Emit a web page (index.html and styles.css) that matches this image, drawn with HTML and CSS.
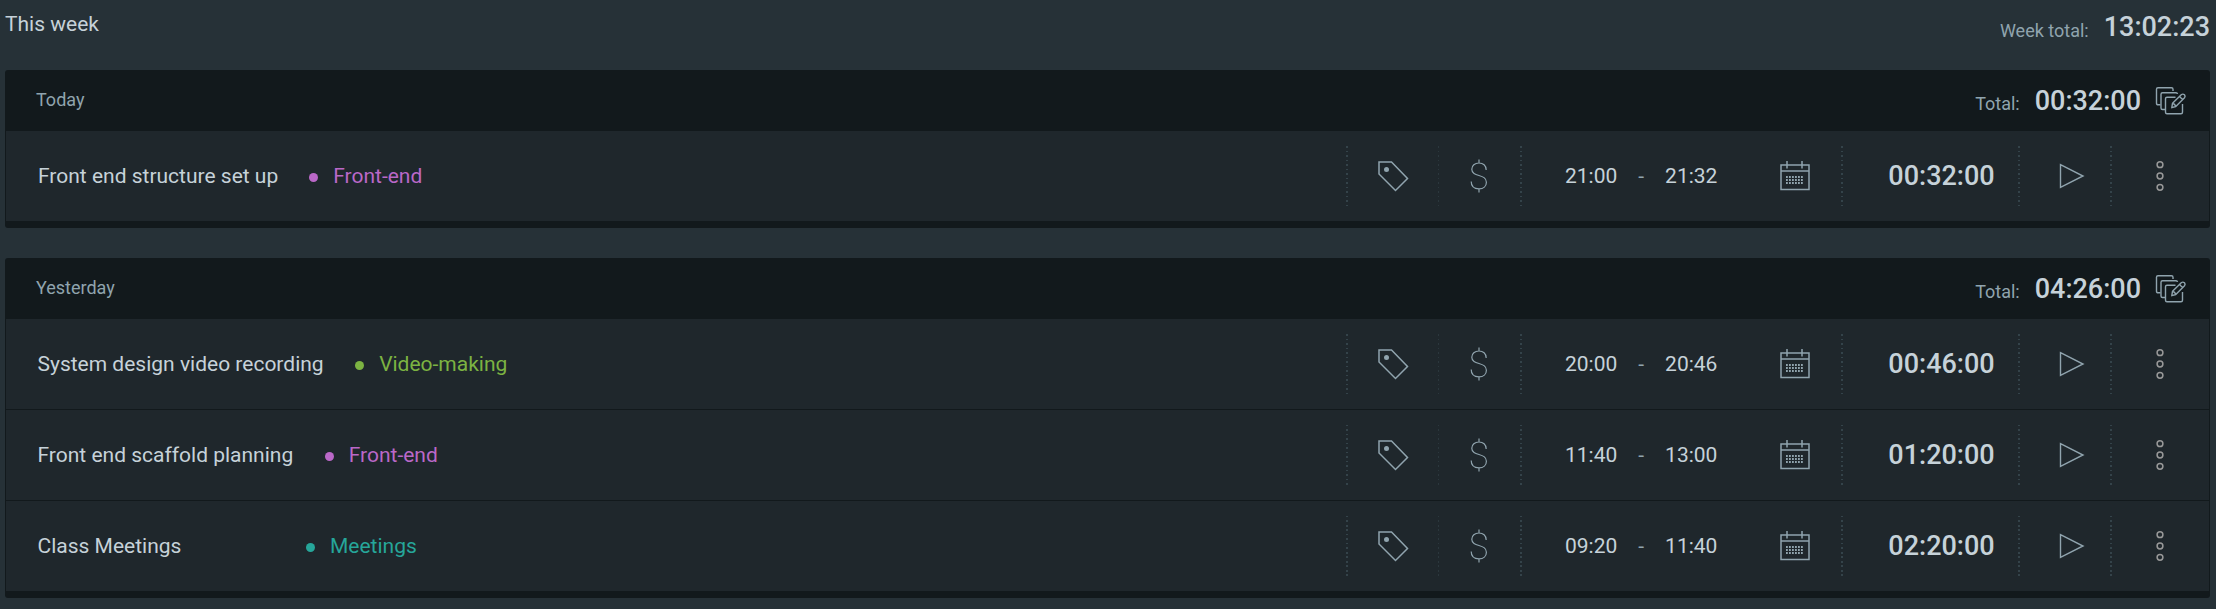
FILE: index.html
```html
<!DOCTYPE html>
<html lang="en">
<head>
<meta charset="utf-8">
<title>Time tracker</title>
<link rel="stylesheet" href="styles.css">
</head>
<body>
<svg class="sprite" aria-hidden="true">
  <symbol id="tag" viewBox="0 0 32 32"><path d="M2 2H14.5L30.5 18.5L18.5 30.5L2 14Z" fill="none" stroke="currentColor" stroke-width="1.5"/><circle cx="9.5" cy="9.5" r="2.5" fill="currentColor"/></symbol>
  <symbol id="dollar" viewBox="0 0 18 34"><path d="M9 .5V4M9 30V33.500M16.200 11C16.200 6.500 13 4 9 4C4.800 4 1.800 6.500 1.800 10.200C1.800 18.500 16.400 14.500 16.400 23.200C16.400 27.300 13.300 29.800 9 29.800C4.500 29.800 1.200 27.400 1.200 22.500" fill="none" stroke="currentColor" stroke-width="1.200"/></symbol>
  <symbol id="calendar" viewBox="0 0 30 30"><path d="M1 4H29V28.500H1ZM1 10H29M7 0V7.500M22 0V7.500" fill="none" stroke="currentColor" stroke-width="1.500"/><path d="M6 16H24M6 19H24M6 22H24" fill="none" stroke="currentColor" stroke-width="1.800" stroke-dasharray="1.800 1.200"/></symbol>
  <symbol id="play" viewBox="0 0 26 26"><path d="M1.500 1.700L24 13L1.500 24.300Z" fill="none" stroke="currentColor" stroke-width="1.400"/></symbol>
  <symbol id="more" viewBox="0 0 8 32"><g fill="none" stroke="#999" stroke-width="1.500"><circle cx="4" cy="4.700" r="2.900"/><circle cx="4" cy="16" r="2.900"/><circle cx="4" cy="27.300" r="2.900"/></g></symbol>
  <symbol id="bulk" viewBox="0 0 32 30"><g fill="none" stroke="currentColor" stroke-width="1.400" stroke-linejoin="round"><path d="M5.500 18.800H3Q1.500 18.800 1.500 17.300V3.300Q1.500 1.800 3 1.800H16.500Q18 1.800 18 3.300V5"/><path d="M10.500 23.500H7.500Q6 23.500 6 22V8.300Q6 6.800 7.500 6.800H21Q22.300 6.800 22.500 8"/><path d="M20.500 11.300H12Q10.500 11.300 10.500 12.800V26.300Q10.500 27.800 12 27.800H26Q27.500 27.800 27.500 26.300V18"/><path d="M16.800 21.700L17.500 17.300L26.500 8.500Q28 7.600 29.500 8.800Q30.700 10.300 29.500 11.800L20.800 20.500ZM17.500 17.300Q20 17.800 20.800 20.500M24.500 10.500L27.500 13.500"/></g></symbol>
</svg>

<main class="tracker">
  <header class="week">
    <span class="week-name">This week</span>
    <span class="sum"><span class="sum-label">Week total:</span><span class="duration">13:02:23</span></span>
  </header>

  <section class="card card-first">
    <header class="card-head">
      <span class="day">Today</span>
      <span class="sum"><span class="sum-label">Total:</span><span class="duration">00:32:00</span></span>
      <svg class="icon icon-bulk"><use href="#bulk"/></svg>
    </header>
    <div class="entry">
      <div class="info"><span class="title">Front end structure set up</span><span class="project pink">Front-end</span></div>
      <div class="cell"><svg class="icon icon-tag"><use href="#tag"/></svg></div>
      <div class="cell faint"><svg class="icon icon-dollar"><use href="#dollar"/></svg></div>
      <div class="cell times"><span class="clock">21:00</span><span class="dash">-</span><span class="clock">21:32</span><svg class="icon icon-calendar"><use href="#calendar"/></svg></div>
      <div class="cell amount"><span class="duration">00:32:00</span></div>
      <div class="cell start"><svg class="icon icon-play"><use href="#play"/></svg></div>
      <div class="cell"><svg class="icon icon-more"><use href="#more"/></svg></div>
    </div>
  </section>

  <section class="card">
    <header class="card-head">
      <span class="day">Yesterday</span>
      <span class="sum"><span class="sum-label">Total:</span><span class="duration">04:26:00</span></span>
      <svg class="icon icon-bulk"><use href="#bulk"/></svg>
    </header>
    <div class="entry">
      <div class="info"><span class="title">System design video recording</span><span class="project green">Video-making</span></div>
      <div class="cell"><svg class="icon icon-tag"><use href="#tag"/></svg></div>
      <div class="cell faint"><svg class="icon icon-dollar"><use href="#dollar"/></svg></div>
      <div class="cell times"><span class="clock">20:00</span><span class="dash">-</span><span class="clock">20:46</span><svg class="icon icon-calendar"><use href="#calendar"/></svg></div>
      <div class="cell amount"><span class="duration">00:46:00</span></div>
      <div class="cell start"><svg class="icon icon-play"><use href="#play"/></svg></div>
      <div class="cell"><svg class="icon icon-more"><use href="#more"/></svg></div>
    </div>
    <div class="entry">
      <div class="info"><span class="title">Front end scaffold planning</span><span class="project pink">Front-end</span></div>
      <div class="cell"><svg class="icon icon-tag"><use href="#tag"/></svg></div>
      <div class="cell faint"><svg class="icon icon-dollar"><use href="#dollar"/></svg></div>
      <div class="cell times"><span class="clock">11:40</span><span class="dash">-</span><span class="clock">13:00</span><svg class="icon icon-calendar"><use href="#calendar"/></svg></div>
      <div class="cell amount"><span class="duration">01:20:00</span></div>
      <div class="cell start"><svg class="icon icon-play"><use href="#play"/></svg></div>
      <div class="cell"><svg class="icon icon-more"><use href="#more"/></svg></div>
    </div>
    <div class="entry">
      <div class="info"><span class="title">Class Meetings</span><span class="project teal">Meetings</span></div>
      <div class="cell"><svg class="icon icon-tag"><use href="#tag"/></svg></div>
      <div class="cell faint"><svg class="icon icon-dollar"><use href="#dollar"/></svg></div>
      <div class="cell times"><span class="clock">09:20</span><span class="dash">-</span><span class="clock">11:40</span><svg class="icon icon-calendar"><use href="#calendar"/></svg></div>
      <div class="cell amount"><span class="duration">02:20:00</span></div>
      <div class="cell start"><svg class="icon icon-play"><use href="#play"/></svg></div>
      <div class="cell"><svg class="icon icon-more"><use href="#more"/></svg></div>
    </div>
  </section>
</main>
</body>
</html>
```
FILE: styles.css
```css
* { box-sizing: border-box; }
body {
  margin: 0;
  background: #263137;
  color: #c6d2d9;
  font-family: Roboto, "Liberation Sans", sans-serif;
  font-size: 21px;
  line-height: 25px;
}
.sprite { display: none; }
.tracker { padding: 0 6px 0 5px; }
.week {
  display: flex;
  justify-content: space-between;
  height: 70px;
  padding-top: 12px;
}
.sum { display: flex; align-items: baseline; gap: 15px; height: 32px; }
.sum-label { font-size: 18px; color: #90a4ae; }
.week .sum { margin-top: -1px; }
.week .sum-label { align-self: flex-start; margin-top: 7px; }
.duration { font-size: 27px; font-weight: 500; line-height: 32px; }

.card {
  margin-bottom: 30px;
  padding: 0 1px 7px;
  background: #12191c;
  border-radius: 3px;
}
.card-head { display: flex; align-items: center; height: 61px; padding: 0 22px 0 30px; }
.day { margin: 0 auto 2px 0; font-size: 18px; color: #90a4ae; }
.icon { display: block; flex: none; color: #90a4ae; }
.icon-bulk { width: 32px; height: 30px; margin-left: 14px; }
.icon-tag { width: 32px; height: 32px; margin-left: 1px; }
.icon-dollar { width: 18px; height: 34px; }
.icon-calendar { width: 30px; height: 30px; margin-left: 63px; }
.icon-play { width: 26px; height: 26px; }
.icon-more { width: 8px; height: 32px; margin-left: 1px; }

.entry {
  display: grid;
  grid-template-columns: 1fr 92px 82px 321px 177px 92px 99px;
  align-items: center;
  height: 90px;
  background: #1f272c;
}
.entry + .entry { margin-top: 1px; }
.info { display: flex; align-items: center; padding-left: 31.5px; }
.card-first .info { padding-left: 32px; }
.title { min-width: 237px; }
.project { display: flex; align-items: center; gap: 15px; margin-left: 31.5px; }
.card-first .project { margin-left: 31px; }
.project::before {
  content: "";
  width: 9px;
  height: 9px;
  margin-top: 2px;
  border-radius: 50%;
  background: currentColor;
}
.pink { color: #ba68c8; }
.green { color: #7cb342; }
.teal { color: #26a69a; }

.cell {
  display: flex;
  align-items: center;
  justify-content: center;
  height: 61px;
  background: repeating-linear-gradient(#34434a 0 1.5px, transparent 1.5px 4.5px) 0 0 / 2px 61px no-repeat;
}
.faint { background-size: 1px 61px; background-image: repeating-linear-gradient(#2b373d 0 1.5px, transparent 1.5px 4.5px); }
.times { justify-content: flex-start; padding-left: 45px; }
.dash { margin: 0 21px; color: #90a4ae; }
.amount { padding-left: 24px; }
.start { padding-left: 16px; }
```
